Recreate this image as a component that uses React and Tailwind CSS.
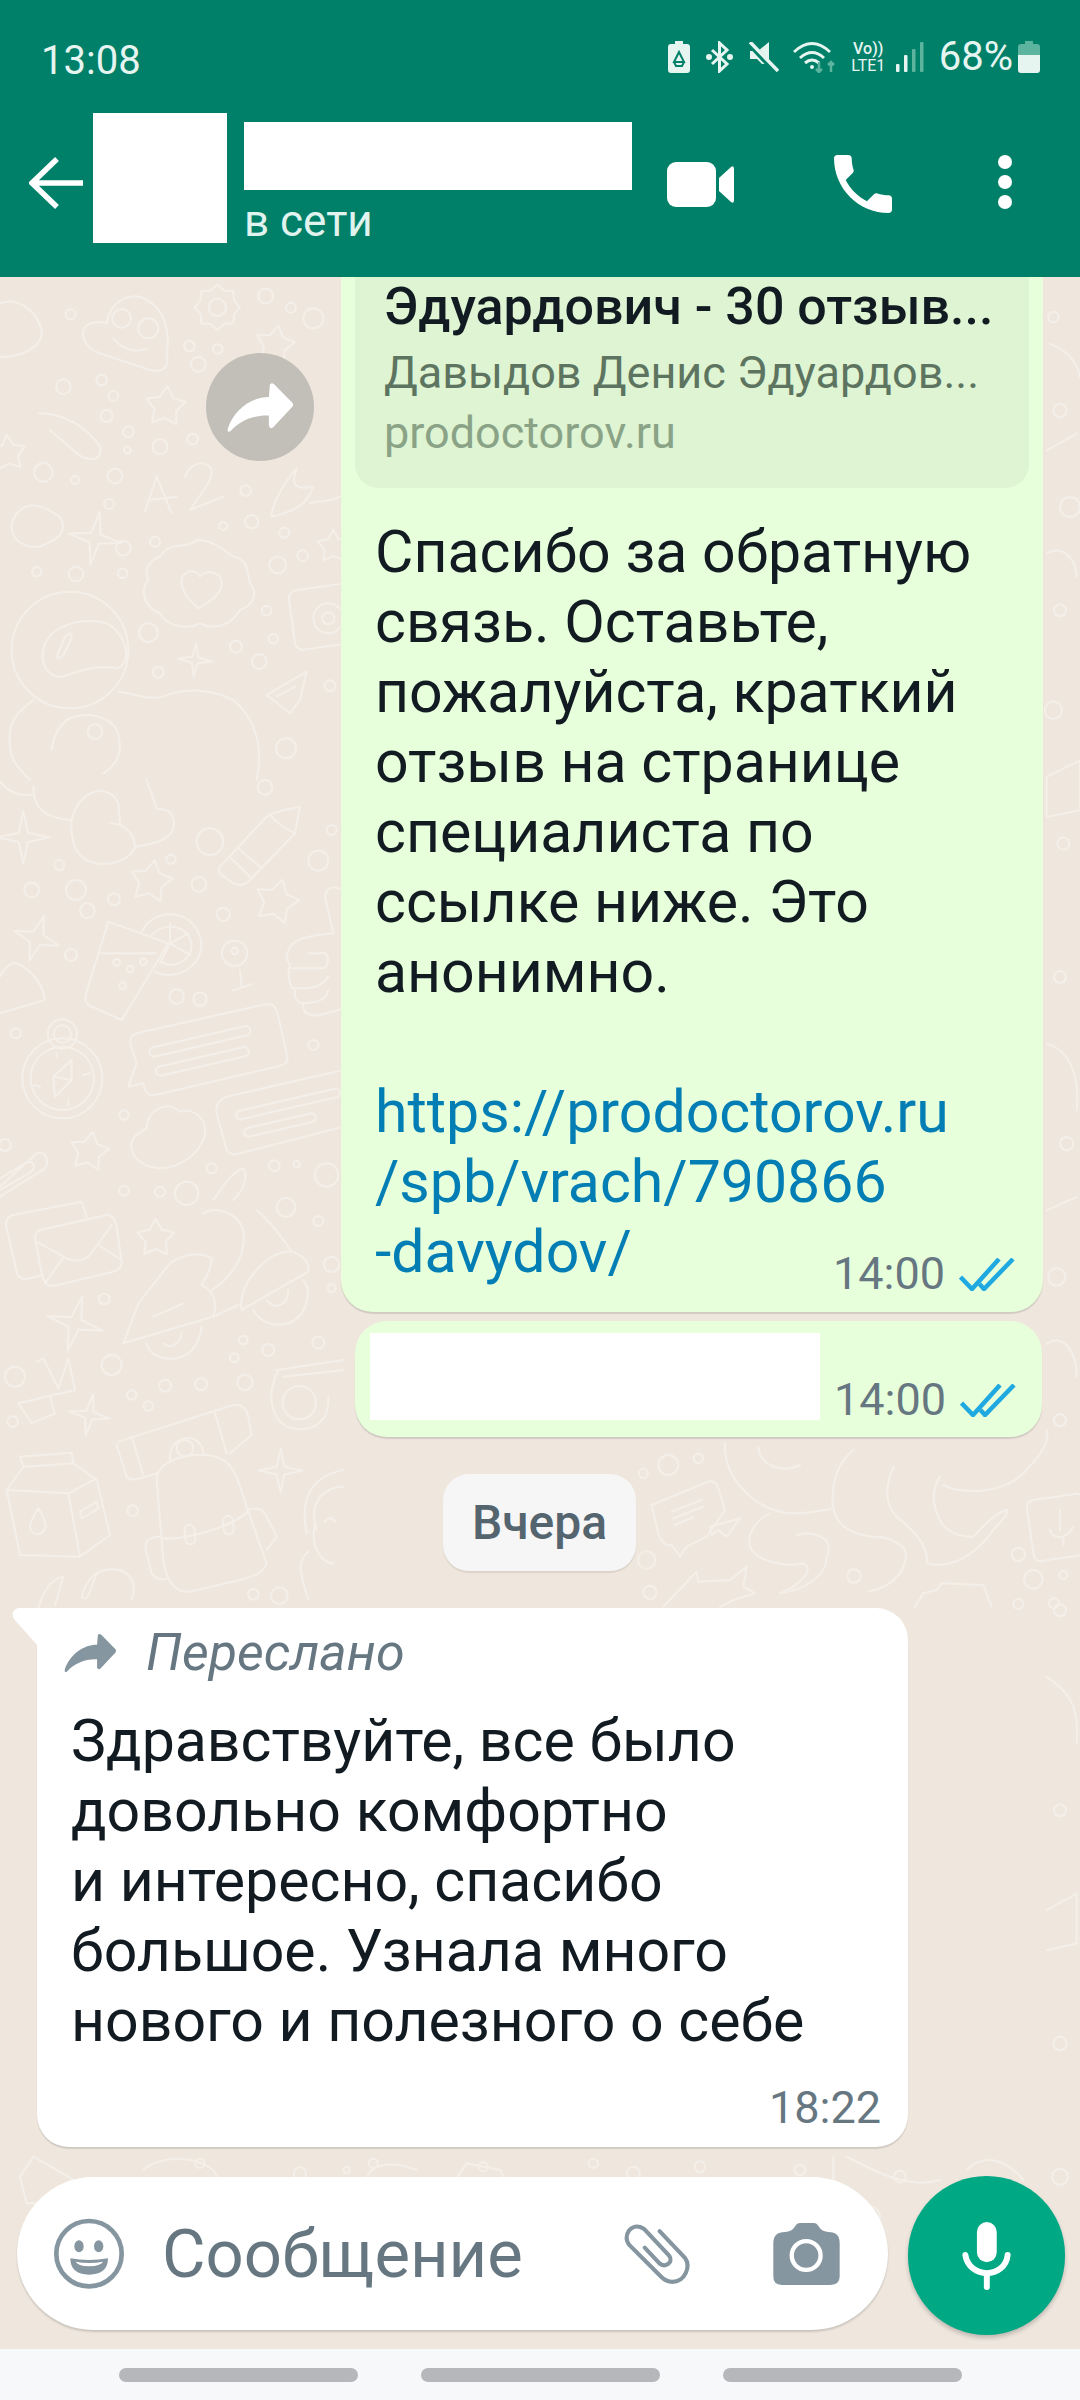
import React from 'react';

const starPath = (cx, cy, r, n, ratio, rot = 0) => {
    const pts = [];
    for (let i = 0; i < n * 2; i++) {
        const rad = i % 2 === 0 ? r : r * ratio;
        const a = ((rot - 90 + (i * 180) / n) * Math.PI) / 180;
        pts.push(`${(cx + rad * Math.cos(a)).toFixed(1)} ${(cy + rad * Math.sin(a)).toFixed(1)}`);
    }
    return `M${pts.join('L')}Z`;
};

const Dots = ({ list }) => list.map(([x, y, r], i) => <circle key={i} cx={x} cy={y} r={r} />);
const Stars = ({ list }) => list.map(([x, y, r, rot], i) => <path key={i} d={starPath(x, y, r, 5, 0.55, rot)} />);
const Sparks = ({ list }) => list.map(([x, y, r, rot], i) => <path key={i} d={starPath(x, y, r, 4, 0.25, rot)} />);

// wallpaper, traced in zoomed-crop coordinates (3x), so each group is scaled back down
const Wallpaper = () => (
    <svg
        className="absolute left-0 top-0 h-[2072px] w-[1080px]"
        viewBox="0 277 1080 2072"
        fill="none"
        stroke="#f4efe9"
        strokeWidth="6"
        strokeLinejoin="round"
        strokeLinecap="round"
    >
        <g transform="translate(0 280) scale(.3333)">
            <Dots list={[[212,103,15],[190,320,22],[305,300,16],[340,347,15],[320,408,18],[385,455,16],[480,500,22],[382,510,10],[578,477,16],[568,198,16],[653,207,14],[595,253,22],[797,48,22],[873,83,15],[940,115,30],[130,577,28],[225,600,12],[345,588,22],[327,672,15],[465,785,15],[370,805,22],[737,632,16],[670,738,12],[755,725,20],[853,758,15],[833,855,25],[908,827,16],[110,875,14],[228,882,22],[368,880,14],[800,992,14],[445,1058,28],[820,1076,14],[708,1100,18],[778,1145,22],[475,1177,16],[990,1217,16],[858,1405,30],[652,82,26],[285,1355,22]]} />
            <Stars list={[[497,380,62,5],[825,195,60,10],[25,520,55,-5],[1000,800,50,0]]} />
            <Sparks list={[[285,775,80,10],[585,1140,50,5]]} />
            <path d={starPath(652, 82, 68, 8, 0.8, 0)} />
            <path d="M250 170C240 130 290 120 320 130C330 60 400 30 440 60C500 90 510 170 500 220C510 260 490 280 450 270L300 220C270 210 255 195 250 170Z" />
            <circle cx="365" cy="115" r="28" /><circle cx="445" cy="145" r="30" />
            <path d="M340 175C370 210 410 220 440 205" />
            <path d="M0 70C50 50 110 90 125 150C130 200 70 230 0 232" />
            <path d="M118 400C190 400 260 440 300 500C310 540 270 550 230 520L150 450" />
            <path d="M435 695L470 590L515 700M445 660L530 650M570 690C610 630 650 590 630 560C600 535 565 560 555 590M570 690L670 650" />
            <path d="M60 690C100 660 150 690 160 700C200 710 200 770 150 785C100 820 40 790 35 750C30 720 50 700 60 690Z" />
            <path d="M480 830C510 780 560 810 590 780C640 780 670 810 700 830C750 840 740 880 750 910C780 950 750 980 720 990C690 1040 640 1050 600 1030C560 1050 500 1040 480 1000C430 980 420 930 445 900C430 870 450 840 480 830Z" />
            <path d="M595 985C540 940 530 890 565 875C585 870 595 880 600 890C610 875 640 870 660 890C680 930 640 960 595 985Z" />
            <circle cx="210" cy="1110" r="175" />
            <path d="M130 1110C140 1040 240 1010 320 1030C380 1060 400 1150 350 1165C290 1155 240 1170 190 1190C150 1195 120 1160 130 1110Z" />
            <path d="M170 1130L195 1070Q215 1050 215 1075L190 1125Q175 1140 170 1130Z" />
            <path d="M355 1235C400 1240 440 1260 490 1250C560 1220 640 1230 700 1260C770 1320 790 1400 770 1500M100 1260C60 1290 20 1320 30 1400C30 1440 60 1470 90 1500M155 1410C160 1380 160 1360 200 1320C260 1290 330 1310 350 1350C370 1400 360 1450 310 1480" />
            <path d="M920 1175L800 1245L870 1300L900 1260ZM830 1250L885 1220" />
            <rect x="875" y="920" width="190" height="180" rx="24" transform="rotate(-8 970 1010)" />
            <circle cx="985" cy="1015" r="45" /><circle cx="985" cy="1015" r="18" />
            <path d="M815 700C830 640 860 600 890 565C870 620 890 630 940 620C920 670 900 690 815 710ZM1020 650C980 670 950 660 930 670" />
        </g>
        <g transform="translate(0 780) scale(.3333)">
            <Dots list={[[795,22,22],[178,255,15],[513,238,14],[630,185,40],[995,150,15],[955,242,30],[95,330,22],[228,330,30],[342,358,18],[262,392,22],[597,313,22],[670,403,20],[213,525,18],[530,650,22],[600,657,20],[47,760,15],[940,795,15],[372,1005,14],[635,1165,15],[823,1157,16],[890,1153,10],[980,1185,35],[372,1232,15],[480,1235,15],[560,1240,35],[15,1095,18]]} />
            <Stars list={[[453,305,65,10],[830,365,68,15],[268,1115,60,10]]} />
            <path d={starPath(110, 475, 70, 4, 0.32, 18)} />
            <Sparks list={[[70,172,78,0]]} />
            <path d="M100 20C100 80 130 115 215 120C210 190 230 250 310 252C370 250 400 220 405 200C470 190 520 180 522 130C520 90 490 85 470 88C460 50 450 30 440 0M330 130C370 130 405 160 405 200M215 120C240 20 330 10 355 70L360 130M0 5C40 50 70 45 100 45" />
            <path d="M660 260L800 110C830 90 860 90 900 80L885 160L745 305C720 325 700 315 660 280Q655 270 660 260ZM715 205L785 265M690 232L755 295M810 105C830 125 850 145 885 160" />
            <path d="M325 425L505 490L365 720L265 675C255 665 255 650 260 635ZM300 520H470" />
            <path d="M425 455C460 385 570 380 600 470C625 550 530 610 465 575M455 465C500 420 570 440 575 495C575 540 520 570 485 545M510 490L510 430M510 490L565 460M510 490L570 525M510 490L480 550" />
            <Dots list={[[350,547,10],[390,567,10],[430,545,10],[368,617,10]]} />
            <path d="M720 570L725 620M700 632L755 612" /><circle cx="704" cy="520" r="38" /><circle cx="704" cy="513" r="10" />
            <path d="M1000 460L975 350C980 310 1020 320 1035 340M1000 460C960 465 900 470 880 490C860 510 855 540 870 555C860 590 870 620 885 630C880 650 895 670 910 672C905 700 930 710 960 705L1035 685M925 520H975C990 530 985 560 970 565H870M875 625C920 625 960 630 985 590M905 670C940 670 980 665 985 630" />
            <path d="M0 590C10 570 30 545 50 550C100 570 130 620 135 660L0 700" />
            <path d="M410 760L800 672C825 670 830 690 835 710L862 830C865 850 850 855 830 860L465 945C440 950 435 930 430 910L385 920L410 850L392 795C388 775 395 765 410 760Z" />
            <rect x="445" y="770" width="310" height="28" rx="14" transform="rotate(-13 600 784)" />
            <rect x="465" y="832" width="285" height="28" rx="14" transform="rotate(-13 600 846)" />
            <circle cx="187" cy="895" r="120" /><circle cx="187" cy="895" r="95" /><circle cx="187" cy="762" r="26" /><circle cx="187" cy="762" r="44" />
            <path d="M215 840L160 890L165 950L215 900ZM160 890L215 900" />
            <path d="M170 820V830M270 880L250 885M100 915L120 920M205 960V975" />
            <path d="M1030 870L680 950C655 960 645 975 650 1000L680 1110C690 1125 700 1125 720 1120L1030 1040" />
            <rect x="705" y="960" width="320" height="26" rx="13" transform="rotate(-13 860 973)" />
            <rect x="730" y="1022" width="220" height="26" rx="13" transform="rotate(-13 840 1035)" />
            <path d="M440 1045C440 990 500 960 540 995C590 985 620 1020 615 1065C600 1120 540 1165 480 1165C410 1160 380 1110 400 1075C410 1060 425 1055 440 1045Z" />
            <path d="M0 1220L110 1120C135 1110 150 1140 135 1165L0 1250M0 1195L85 1145C105 1145 105 1165 95 1175L0 1230" />
            <path d="M640 1260C670 1220 690 1180 730 1165C745 1195 730 1230 700 1260" />
        </g>
        <g transform="translate(0 1200) scale(.3333)">
            <Dots list={[[858,22,28],[955,63,15],[313,297,16],[995,193,23],[995,265,12],[730,420,13],[805,450,18],[703,473,13],[955,428,18],[335,495,30],[45,530,30],[495,557,18],[603,553,18],[735,547,23],[395,585,14],[445,618,14],[38,665,16],[398,932,16],[760,1183,16],[838,1187,25],[555,745,25]]} />
            <Stars list={[[467,115,58,0]]} />
            <Sparks list={[[225,370,85,15],[268,645,62,10],[842,812,66,0]]} />
            <path d="M260 50L245 5L40 45C20 50 15 70 20 85L50 215C55 235 70 240 90 235L130 225" />
            <path d="M120 90L320 45C340 45 345 60 350 80L365 185C365 205 355 210 340 215L160 258C140 260 130 245 125 220L105 115C105 100 110 95 120 90ZM110 125L205 178C230 185 255 180 270 165L335 75M135 250L188 175M295 135L365 180" />
            <path d="M370 430L415 310L510 190C560 155 610 160 635 175C635 200 620 230 605 255C650 280 650 320 640 350L370 430ZM460 350L550 310" />
            <path d="M635 270C700 230 740 160 730 90C710 30 640 20 610 40M770 30C820 70 850 120 875 155C910 165 930 190 925 215L725 330C710 270 790 150 875 155M640 350L715 315M760 330C790 390 890 390 915 320C930 280 925 260 910 240M800 300C820 330 865 320 865 270M440 430C450 490 590 510 605 380M490 430C510 450 545 430 545 395" />
            <path d="M830 510L1030 480M850 530L1030 510M835 510C800 580 810 650 860 680C920 700 990 680 985 590" />
            <circle cx="898" cy="608" r="50" />
            <path d="M110 485L130 475L175 565L205 475L225 570L55 610L95 670L165 640L150 590" />
            <path d="M355 725L700 615C730 610 740 630 745 650L755 705L690 760M350 735L380 830C390 845 410 840 470 820M395 710L430 825M645 640L680 760" />
            <path d="M470 840C470 790 540 760 620 765C670 770 690 790 710 830L745 935L800 1090C790 1120 760 1130 720 1140L570 1175C530 1180 500 1150 490 1080ZM490 1015C540 1020 680 990 745 935M740 930C780 920 790 930 800 950L830 1010L800 1050M480 1010C440 1010 430 1030 440 1060L455 1120C470 1140 490 1140 500 1135" />
            <path d="M510 785C500 700 610 690 610 765" />
            <rect x="555" y="975" width="30" height="58" rx="15" transform="rotate(-5 570 1005)" />
            <rect x="670" y="948" width="30" height="55" rx="15" transform="rotate(-5 685 975)" />
            <path d="M60 770L215 758L220 790L290 840L330 1005L240 1070L60 1065L20 870L70 800ZM20 870L205 880L290 835M205 880L240 1070M70 800L220 790" />
            <path d="M115 925C130 950 140 975 135 985C125 1010 95 1005 90 985C90 960 105 945 115 925ZM240 935L290 905L295 925L245 955Z" />
            <path d="M110 1240C130 1170 150 1140 190 1130L165 1215M245 1190C260 1130 300 1100 360 1110C410 1130 405 1170 395 1200M245 1190C260 1210 270 1180 290 1120" />
            <path d="M920 1000C900 900 930 830 1030 810M950 990C920 890 990 860 1030 860M1000 1090C960 1090 930 1030 945 970M925 1055C890 1080 900 1120 925 1200M975 965Q990 945 1005 965" />
        </g>
        <g transform="translate(630 1430) scale(.3333)">
            <Dots list={[[40,130,14],[115,105,30],[205,85,14],[50,390,26],[60,487,20],[672,438,20],[1165,373,20],[1210,448,28],[1300,435,12],[1165,522,15],[1272,520,15]]} />
            <path d="M65 225L235 155C250 150 260 160 265 175L285 240L230 320L170 350L150 380L125 345C105 350 90 330 85 310Z" />
            <path d="M125 245L215 210M130 265L220 230M135 285L190 262M240 290L330 265L290 320L265 300L245 315Z" />
            <path d="M285 40C280 140 370 240 480 250C540 250 590 240 610 235M610 235C600 170 620 100 670 60M385 50C390 110 460 130 510 105M420 250C380 270 350 310 360 350C380 400 480 410 520 400C560 420 500 470 450 490M610 235C620 290 670 320 760 322C820 340 850 360 810 430C780 470 740 480 715 485M790 110C770 160 760 220 800 260C850 300 900 350 890 400C970 420 1040 370 1090 300C1120 270 1140 240 1130 240C1090 250 1050 300 1030 320C980 320 950 300 935 280C900 220 910 170 930 140M940 165C1000 195 1120 190 1180 130C1240 70 1260 30 1250 0" />
            <path d="M500 315C540 300 620 320 590 380C590 440 520 480 450 490" />
            <rect x="1200" y="200" width="170" height="185" rx="20" transform="rotate(-8 1285 290)" />
            <path d="M1290 240V300M1260 300C1270 330 1310 330 1330 290M1300 320V345" />
            <path d="M100 530L200 425L205 455L300 450L350 410L340 470L375 490L310 510L270 530M855 530L880 490L920 480L935 460L1060 465L1085 530" />
        </g>
        <g transform="translate(0 2150) scale(.3333)">
            <Dots list={[[1040,60,10],[1120,40,14],[1450,50,14],[1780,40,14],[1900,70,20],[2100,50,16],[600,40,14],[900,70,18],[2400,60,16],[2610,200,30],[2700,80,18]]} />
            <path d="M100 20L240 100L200 160H80L60 80ZM430 60C500 0 640 30 650 80M1100 100C1100 40 1170 30 1250 60M2100 90L2250 140M2540 20C2620 60 2720 120 2820 90M2500 20V150M2900 60C2960 0 3030 40 3070 90M1360 100L1400 40L1500 60L1520 100" />
        </g>
        <g transform="translate(1040 277) scale(.3333)">
            <Dots list={[[40,120,16],[60,400,20],[90,690,30],[60,1000,18],[40,1300,26],[70,1700,18],[60,2100,18],[80,2600,20],[50,3000,26],[60,3430,18],[60,4000,18],[60,4600,18],[60,5300,20],[60,5700,24]]} />
            <path d="M30 200C80 220 110 250 120 300M20 520L110 470M20 830C70 800 110 850 110 900M20 1500L120 1450V1600L20 1620ZM20 2300C90 2320 120 2400 110 2500M20 2800L110 2760M20 3200C70 3170 110 3220 110 3300M20 4200C80 4240 120 4280 110 4400M20 4900L110 4850V5000L20 5020" />
        </g>
    </svg>
);

const Ticks = () => (
    <svg viewBox="0 0 56 33" className="ml-[14px] h-[33px] w-[56px]" fill="none" stroke="#1fa9e0" strokeWidth="4.5">
        <path d="M1.5 19L13 31L40 1" />
        <path d="M20.5 26L25 31L54 1" />
    </svg>
);

const FORWARD_PATH = 'M808 308Q812 300 820 306L875 362Q880 368 875 374L818 435Q808 442 805 430L805 400C760 398 720 415 690 447Q680 452 682 440C700 385 750 345 805 345Z';

const MsgTime = ({ children, read }) => (
    <div className="flex items-center">
        <span className="text-[45px] leading-[50px] text-[#667781]">{children}</span>
        {read && <Ticks />}
    </div>
);

const StatusBar = () => (
    <div className="flex h-[103px] items-start justify-between pl-[41px] pr-[40px] pt-[40px] text-[#e6f5f0]">
        <span className="text-[40px] leading-[42px]">13:08</span>
        <div className="flex h-[34px] items-center">
            <svg viewBox="0 0 22 32" className="h-[32px] w-[22px]">
                <path fill="#e6f5f0" d="M7 0H15V3H19Q22 3 22 6V29Q22 32 19 32H3Q0 32 0 29V6Q0 3 3 3H7Z" />
                <path fill="none" stroke="#008069" strokeWidth="2" d="M11 11L6 21H16ZM6 21L8 25H14L16 21" />
            </svg>
            <svg viewBox="0 0 27 32" className="ml-[16px] h-[32px] w-[27px]" fill="none" stroke="#e6f5f0" strokeWidth="3">
                <path d="M6 9L21 23L13.5 30V2L21 9L6 23" />
                <circle cx="3" cy="16" r="1.5" fill="#e6f5f0" />
                <circle cx="24" cy="16" r="1.5" fill="#e6f5f0" />
            </svg>
            <svg viewBox="0 0 30 30" className="ml-[16px] h-[30px] w-[30px]">
                <path fill="#e6f5f0" d="M1 9H9L20 0V22H13L8 17H1Z" />
                <path fill="none" stroke="#008069" strokeWidth="6" d="M1 2L29 32" />
                <path fill="none" stroke="#e6f5f0" strokeWidth="3.5" d="M1 0L29 29" />
            </svg>
            <svg viewBox="0 0 43 32" className="ml-[14px] h-[32px] w-[43px]" fill="none" stroke="#e6f5f0" strokeWidth="3">
                <path d="M1 11Q19 -6 37 11M7 17Q19 6 31 17M12 22Q19 16 26 22" />
                <circle cx="19" cy="26" r="2" fill="#e6f5f0" stroke="none" />
                <path stroke="#5cb39e" strokeWidth="2.5" d="M26 21V31M23 28L26 31L29 28M38 31V21M35 24L38 21L41 24" />
            </svg>
            <div className="ml-[13px] flex w-[39px] flex-col items-center text-[16px] leading-[17px]">
                <span className="font-medium">Vo))</span>
                <span>LTE1</span>
            </div>
            <svg viewBox="0 0 28 32" className="ml-[8px] h-[32px] w-[28px]" fill="#5cb39e">
                <rect fill="#e6f5f0" x="0" y="23" width="3.5" height="8" rx="1" />
                <rect fill="#e6f5f0" x="8" y="14" width="3.5" height="17" rx="1" />
                <rect x="16" y="8" width="3.5" height="23" rx="1" />
                <rect x="24" y="1" width="3.5" height="30" rx="1" />
            </svg>
            <span className="ml-[15px] text-[40px] leading-[42px]">68%</span>
            <svg viewBox="0 0 22 32" className="ml-[5px] h-[32px] w-[22px]">
                <path fill="#5cb39e" d="M7 0H15V3H19Q22 3 22 6V14H0V6Q0 3 3 3H7Z" />
                <path fill="#e6f5f0" d="M0 14H22V29Q22 32 19 32H3Q0 32 0 29Z" />
            </svg>
        </div>
    </div>
);

const Toolbar = () => (
    <div className="flex h-[174px] items-start">
        <svg viewBox="0 0 54 52" className="ml-[29px] mt-[54px] h-[52px] w-[54px]" fill="none" stroke="#fff" strokeWidth="5.5">
            <path d="M54 26H4M28 2L3 26L28 50" />
        </svg>
        <div className="ml-[10px] mt-[10px] h-[130px] w-[134px] bg-white" />
        <div className="ml-[17px] mt-[19px] w-[388px]">
            <div className="h-[68px] w-[388px] bg-white" />
            <div className="mt-[4px] text-[44px] leading-[54px] text-[#e0f3ee]">в сети</div>
        </div>
        <svg viewBox="0 0 67 45" className="ml-[35px] mt-[59px] h-[45px] w-[67px]" fill="#fff">
            <rect width="49" height="45" rx="9" />
            <path d="M52 16L64 5Q67 3 67 7V38Q67 42 64 40L52 29Z" />
        </svg>
        <svg viewBox="3 3 18 18" className="ml-[99px] mt-[52px] h-[58px] w-[60px]" fill="#fff">
            <path d="M6.62 10.79c1.44 2.83 3.76 5.14 6.59 6.59l2.2-2.2c.27-.27.67-.36 1.02-.24 1.12.37 2.33.57 3.57.57.55 0 1 .45 1 1V20c0 .55-.45 1-1 1-9.39 0-17-7.61-17-17 0-.55.45-1 1-1h3.5c.55 0 1 .45 1 1 0 1.25.2 2.45.57 3.57.11.35.03.74-.25 1.02l-2.2 2.2z" />
        </svg>
        <div className="ml-[105px] mt-[52px] flex flex-col gap-[6px]">
            <div className="h-[14px] w-[14px] rounded-full bg-white" />
            <div className="h-[14px] w-[14px] rounded-full bg-white" />
            <div className="h-[14px] w-[14px] rounded-full bg-white" />
        </div>
    </div>
);

const LINES = ['Спасибо за обратную', 'связь. Оставьте,', 'пожалуйста, краткий', 'отзыв на странице', 'специалиста по', 'ссылке ниже. Это', 'анонимно.'];
const RECEIVED = ['Здравствуйте, все было', 'довольно комфортно', 'и интересно, спасибо', 'большое. Узнала много', 'нового и полезного о себе'];

const InputBar = () => (
    <div className="relative mt-auto flex items-end pb-[14px] pl-[17px]">
        <div className="mb-[5px] flex h-[153px] w-[871px] items-center rounded-full bg-white pl-[36px] shadow-[0_2px_2px_rgba(0,0,0,0.15)]">
            <svg viewBox="70 55 216 216" className="h-[72px] w-[72px]">
                <circle cx="178" cy="162" r="98" fill="none" stroke="#8696a0" strokeWidth="14" />
                <ellipse cx="148" cy="140" rx="14" ry="18" fill="#8696a0" />
                <ellipse cx="207" cy="140" rx="14" ry="18" fill="#8696a0" />
                <path fill="#8696a0" d="M122 176Q178 186 235 176Q235 225 178 225Q122 225 122 176Z" />
                <path fill="#fff" d="M138 186Q178 194 220 186Q214 198 178 200Q144 198 138 186Z" />
            </svg>
            <span className="ml-[37px] w-[458px] whitespace-nowrap text-[67px] leading-[76px] text-[#667781]">Сообщение</span>
            <svg viewBox="0 60 240 200" className="h-[64px] w-[76px]" fill="none" stroke="#8696a0" strokeWidth="13" strokeLinecap="round">
                <path d="M125 88L205 172C225 200 205 248 165 248C150 248 140 242 130 232L30 132C5 105 35 55 75 80L155 165C170 185 145 205 125 190L78 140" />
            </svg>
            <svg viewBox="465 65 198 185" className="ml-[77px] h-[62px] w-[67px]">
                <path fill="#8696a0" d="M500 92Q520 92 530 75Q535 65 545 65H585Q595 65 600 75Q610 92 630 92Q663 92 663 125V225Q663 250 635 250H490Q465 250 465 225V125Q465 92 500 92Z" />
                <circle cx="563" cy="162" r="43" fill="none" stroke="#fff" strokeWidth="13" />
            </svg>
        </div>
        <div className="ml-[20px] flex h-[159px] w-[157px] items-center justify-center rounded-full bg-[#00a884] shadow-[0_3px_4px_rgba(0,0,0,0.2)]">
            <svg viewBox="1022 62 154 212" className="h-[70px] w-[51px]" fill="none" stroke="#fff" strokeLinecap="round">
                <rect x="1070" y="65" width="60" height="122" rx="30" fill="#fff" stroke="none" />
                <path strokeWidth="18" d="M1035 165C1040 200 1070 220 1100 220C1130 220 1160 200 1163 165M1100 220V262" />
            </svg>
        </div>
    </div>
);

const App = () => (
    <div className="flex h-[2400px] w-[1080px] flex-col overflow-hidden bg-[#efe7de] font-[Roboto,sans-serif]">
        <header className="h-[277px] shrink-0 bg-[#008069]">
            <StatusBar />
            <Toolbar />
        </header>

        <main className="relative flex min-h-0 flex-1 flex-col">
            <Wallpaper />

            <div className="relative flex items-start">
                <div className="ml-[206px] mr-[27px] mt-[76px] flex h-[108px] w-[108px] items-center justify-center rounded-full bg-[#c2bfb9]">
                    <svg viewBox="680 300 200 152" className="h-[51px] w-[67px]" fill="#fff">
                        <path d={FORWARD_PATH} />
                    </svg>
                </div>
                <div className="w-[702px] rounded-b-[32px] bg-[#e7ffdb] px-[14px] pb-[25px] shadow-[0_2px_1px_rgba(0,0,0,0.12)]">
                    <div className="rounded-b-[24px] bg-[#def4d2] pb-[25px] pl-[29px] pr-[10px]">
                        <div className="whitespace-nowrap text-[52px] font-medium leading-[60px] text-[#111b21]">Эдуардович - 30 отзыв...</div>
                        <div className="mt-[6px] whitespace-nowrap text-[45px] leading-[60px] text-[#5d7560]">Давыдов Денис Эдуардов...</div>
                        <div className="text-[45px] leading-[60px] text-[#8aa386]">prodoctorov.ru</div>
                    </div>
                    <div className="mt-[29px] whitespace-nowrap pl-[20px] text-[59px] leading-[70px] text-[#111b21]">
                        {LINES.map((line) => (
                            <div key={line}>{line}</div>
                        ))}
                        <div className="h-[70px]" />
                        <div className="text-[#027eb5]">https://prodoctorov.ru</div>
                        <div className="text-[#027eb5]">/spb/vrach/790866</div>
                        <div className="flex items-end justify-between pr-[14px]">
                            <span className="text-[#027eb5]">-davydov/</span>
                            <div className="mb-[-12px]">
                                <MsgTime read>14:00</MsgTime>
                            </div>
                        </div>
                    </div>
                </div>
            </div>

            <div className="relative ml-[355px] mt-[9px] flex h-[116px] w-[687px] items-start rounded-[32px] bg-[#e7ffdb] pl-[15px] pt-[12px] shadow-[0_2px_1px_rgba(0,0,0,0.12)]">
                <div className="h-[87px] w-[450px] bg-white" />
                <div className="ml-[14px] mt-[42px]">
                    <MsgTime read>14:00</MsgTime>
                </div>
            </div>

            <div className="relative ml-[443px] mt-[37px] flex h-[97px] w-[193px] items-center justify-center rounded-[26px] bg-[#f6f6f6] text-[48px] font-medium text-[#54656f] shadow-[0_2px_1px_rgba(0,0,0,0.08)]">
                Вчера
            </div>

            <div className="relative ml-[37px] mt-[37px] h-[539px] w-[871px] rounded-b-[32px] rounded-tr-[32px] bg-white pl-[34px] shadow-[0_2px_1px_rgba(0,0,0,0.12)]">
                <svg viewBox="0 0 26 38" className="absolute left-[-25px] top-0 h-[38px] w-[26px]" fill="#fff">
                    <path d="M6 0H26V38L2 11Q-2 3 6 0Z" />
                </svg>
                <div className="flex h-[98px] items-center pb-[8px]">
                    <svg viewBox="680 300 200 152" className="ml-[-8px] h-[40px] w-[55px]" fill="#8696a0">
                        <path d={FORWARD_PATH} />
                    </svg>
                    <span className="ml-[28px] text-[52px] italic leading-[60px] text-[#667781]">Переслано</span>
                </div>
                <div className="whitespace-nowrap text-[59px] leading-[70px] text-[#111b21]">
                    {RECEIVED.map((line) => (
                        <div key={line}>{line}</div>
                    ))}
                </div>
                <div className="mt-[27px] flex justify-end pr-[27px]">
                    <MsgTime>18:22</MsgTime>
                </div>
            </div>

            <InputBar />
        </main>

        <nav className="flex h-[51px] shrink-0 items-start justify-center gap-[63px] bg-[#f6f8fa] pt-[19px]">
            <div className="h-[14px] w-[239px] rounded-full bg-[#b5b7ba]" />
            <div className="h-[14px] w-[239px] rounded-full bg-[#b5b7ba]" />
            <div className="h-[14px] w-[239px] rounded-full bg-[#b5b7ba]" />
        </nav>
    </div>
);

export default App;
